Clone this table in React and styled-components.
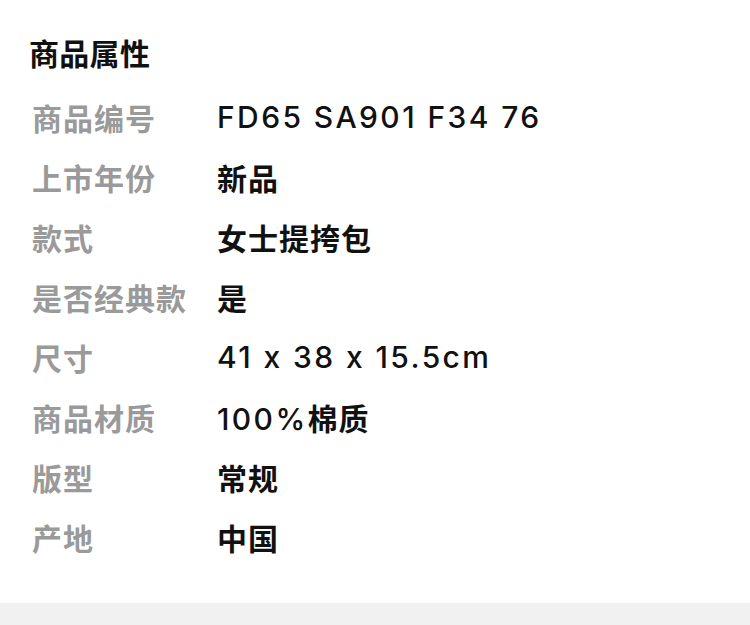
import React from "react";
import styled, { createGlobalStyle } from "styled-components";

const Global = createGlobalStyle`
  html, body { margin: 0; padding: 0; background: #fff; }
  body { font-family: Inter, "Noto Sans CJK SC", sans-serif; -webkit-font-smoothing: antialiased; }
`;

const Page = styled.div`
  width: 750px;
  height: 625px;
  display: flex;
  flex-direction: column;
  background: #fff;
`;

const Card = styled.section`
  flex: 1;
  padding: 32px 0 33px 29px;
  display: flex;
  flex-direction: column;
`;

const Title = styled.h2`
  margin: 0;
  font-family: "Noto Sans CJK SC", sans-serif;
  font-size: 30px;
  line-height: 40px;
  font-weight: 700;
  color: #111;
  letter-spacing: 0.3px;
`;

const List = styled.dl`
  margin: 15px 0 0;
  display: grid;
  grid-template-columns: 188px 1fr;
  grid-auto-rows: 60px;
  align-items: center;
`;

const Label = styled.dt`
  padding-left: 3px;
  font-family: "Noto Sans CJK SC", sans-serif;
  font-size: 30px;
  font-weight: 700;
  color: #9a9a9a;
  letter-spacing: 1px;
`;

const Value = styled.dd`
  margin: 0;
  font-size: 30px;
  color: #111;
  white-space: nowrap;
`;

const Latin = styled.span`
  font-family: Inter, sans-serif;
  font-weight: 500;
  letter-spacing: 2.4px;
  font-feature-settings: "calt" 0;
`;

const Han = styled.span`
  font-family: "Noto Sans CJK SC", sans-serif;
  font-weight: 700;
  letter-spacing: 1px;
`;

const rows = [
  ["商品编号", "FD65 SA901 F34 76"],
  ["上市年份", "新品"],
  ["款式", "女士提挎包"],
  ["是否经典款", "是"],
  ["尺寸", "41 x 38 x 15.5cm"],
  ["商品材质", "100%棉质"],
  ["版型", "常规"],
  ["产地", "中国"],
];

function splitRuns(text) {
  return text.match(/[\u3400-\u9fff]+|[^\u3400-\u9fff]+/g) || [];
}

export default function App() {
  return (
    <Page>
      <Global />
      <Card>
        <Title>商品属性</Title>
        <List>
          {rows.map(([k, v]) => (
            <React.Fragment key={k}>
              <Label>{k}</Label>
              <Value>
                {splitRuns(v).map((run, i) =>
                  /[\u3400-\u9fff]/.test(run) ? (
                    <Han key={i}>{run}</Han>
                  ) : (
                    <Latin key={i}>{run}</Latin>
                  )
                )}
              </Value>
            </React.Fragment>
          ))}
        </List>
      </Card>
      <Footer />
    </Page>
  );
}

const Footer = styled.div`
  height: 22px;
  background: #f1f1f1;
`;
